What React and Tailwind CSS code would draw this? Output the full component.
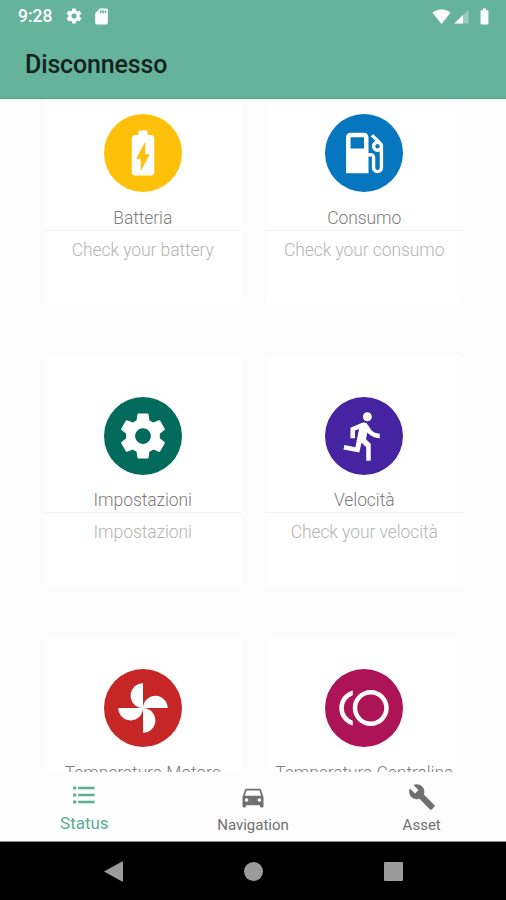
import {
  MdBatteryChargingFull,
  MdBatteryFull,
  MdBuild,
  MdDirectionsCar,
  MdDirectionsRun,
  MdFormatListBulleted,
  MdLocalGasStation,
  MdSdCard,
  MdSignalWifi4Bar,
  MdToll,
} from "react-icons/md";

function GearIcon({ className }) {
  return (
    <svg viewBox="0 0 24 24" fill="currentColor" className={className}>
      <path d="M19.43 12.98c.04-.32.07-.64.07-.98s-.03-.66-.07-.98l2.11-1.65c.19-.15.24-.42.12-.64l-2-3.46c-.12-.22-.39-.3-.61-.22l-2.49 1c-.52-.4-1.08-.73-1.69-.98l-.38-2.65C14.46 2.18 14.25 2 14 2h-4c-.25 0-.46.18-.49.42l-.38 2.65c-.61.25-1.17.59-1.69.98l-2.49-1c-.23-.09-.49 0-.61.22l-2 3.46c-.13.22-.07.49.12.64l2.11 1.65c-.04.32-.07.65-.07.98s.03.66.07.98l-2.11 1.65c-.19.15-.24.42-.12.64l2 3.46c.12.22.39.3.61.22l2.49-1c.52.4 1.08.73 1.69.98l.38 2.65c.03.24.24.42.49.42h4c.25 0 .46-.18.49-.42l.38-2.65c.61-.25 1.17-.59 1.69-.98l2.49 1c.23.09.49 0 .61-.22l2-3.46c.12-.22.07-.49-.12-.64l-2.11-1.65zM12 15.5c-1.93 0-3.5-1.57-3.5-3.5s1.57-3.5 3.5-3.5 3.5 1.57 3.5 3.5-1.57 3.5-3.5 3.5z" />
    </svg>
  );
}

function FanIcon({ className }) {
  return (
    <svg viewBox="0 0 24 24" fill="currentColor" className={className}>
      <path d="M12 12c0-3 2.46-5.5 5.5-5.5S23 9 23 12H12zm0 0c0 3-2.46 5.5-5.5 5.5S1 15 1 12h11zm0 0c-3 0-5.5-2.46-5.5-5.5S9 1 12 1v11zm0 0c3 0 5.5 2.46 5.5 5.5S15 23 12 23V12z" />
    </svg>
  );
}

function SignalIcon({ className }) {
  return (
    <svg viewBox="0 0 24 24" fill="currentColor" className={className}>
      <path fillOpacity=".35" d="M2 22h20V2z" />
      <path d="M14 10L2 22h12z" />
    </svg>
  );
}

const cards = [
  { title: "Batteria", text: "Check your battery", icon: MdBatteryChargingFull, color: "bg-[#ffc009]", pad: "pt-[42px]", gap: "mt-[14px]" },
  { title: "Consumo", text: "Check your consumo", icon: MdLocalGasStation, color: "bg-[#0676be]", pad: "pt-[42px]", gap: "mt-[14px]" },
  { title: "Impostazioni", text: "Impostazioni", icon: GearIcon, color: "bg-[#026b5b]", pad: "pt-[42px]", gap: "mt-[13px]" },
  { title: "Velocità", text: "Check your velocità", icon: MdDirectionsRun, color: "bg-[#4623a0]", pad: "pt-[42px]", gap: "mt-[13px]" },
  { title: "Temperatura Motore", icon: FanIcon, color: "bg-[#c72626]", pad: "pt-[31px]", gap: "mt-[14px]" },
  { title: "Temperatura Centralina", icon: MdToll, color: "bg-[#ad1357]", pad: "pt-[31px]", gap: "mt-[14px]" },
];

const tabs = [
  { label: "Status", icon: MdFormatListBulleted, active: true },
  { label: "Navigation", icon: MdDirectionsCar },
  { label: "Asset", icon: MdBuild },
];

export default function App() {
  return (
    <div className="flex h-[900px] w-[506px] flex-col overflow-hidden bg-[#fcfcfc] font-['Roboto',sans-serif]">
      {/* Status bar + title */}
      <header className="h-[99px] shrink-0 border-b border-[#4ba388] bg-[#66b39b]">
        <div className="flex h-8 items-center pl-[18px] pr-[12px] text-white">
          <span className="text-[17.5px] font-medium leading-[18px]">9:28</span>
          <GearIcon className="ml-[13px] size-[18px]" />
          <MdSdCard className="ml-[9px] size-[19px]" />
          <MdSignalWifi4Bar className="ml-auto size-[19px]" />
          <SignalIcon className="ml-[2px] size-[17px]" />
          <MdBatteryFull className="ml-[5px] size-[19px]" />
        </div>
        <h1 className="pl-[25px] pt-[18px] text-[25px] font-medium leading-[30px] tracking-[-0.15px] text-[#10231d]">
          Disconnesso
        </h1>
      </header>

      {/* Cards */}
      <main className="h-[673px] shrink-0 overflow-hidden">
        <div className="-mt-[27px] grid grid-cols-2 gap-x-[24px] gap-y-[50px] pl-[44px] pr-[43px]">
          {cards.map((card) => (
            <section key={card.title} className={`flex h-[233px] flex-col items-center rounded-md bg-white ${card.pad}`}>
              <div className={`flex size-[78px] shrink-0 items-center justify-center rounded-full text-white ${card.color}`}>
                <card.icon className="size-[54px]" />
              </div>
              <h2 className={`whitespace-nowrap text-[17.5px] font-light leading-[24px] tracking-[-0.08px] text-[#7c7c7c] ${card.gap}`}>
                {card.title}
              </h2>
              <div className="h-px w-full shrink-0 bg-[#f3f3f3]" />
              {card.text && (
                <p className="mt-[7px] whitespace-nowrap text-[17.5px] font-light leading-[24px] tracking-[-0.08px] text-[#b4b4b4]">
                  {card.text}
                </p>
              )}
            </section>
          ))}
        </div>
      </main>

      {/* Bottom tabs */}
      <nav className="flex h-[70px] shrink-0 border-b border-[#8c8c8c] bg-[#fdfdfd]">
        {tabs.map((tab) => (
          <div
            key={tab.label}
            className={`flex flex-1 flex-col items-center ${tab.active ? "pt-[9px] text-[#5aae93]" : "pt-[11px] text-[#707070]"}`}
          >
            <tab.icon className="size-[28px]" />
            <span className={tab.active ? "mt-[4px] text-[17px] leading-[20px]" : "mt-[3px] text-[15px] leading-[22px]"}>
              {tab.label}
            </span>
          </div>
        ))}
      </nav>

      {/* System buttons */}
      <footer className="flex flex-1 items-center justify-center gap-[121px] bg-black text-[#9b9b9b]">
        <svg viewBox="0 0 20 22" fill="currentColor" className="h-[21px] w-[19px]">
          <path d="M0 11L19 .5Q20 0 20 1V21Q20 22 19 21.5Z" />
        </svg>
        <div className="size-[19px] rounded-full bg-[#9b9b9b]" />
        <div className="size-[19px] rounded-[1px] bg-[#9b9b9b]" />
      </footer>
    </div>
  );
}
